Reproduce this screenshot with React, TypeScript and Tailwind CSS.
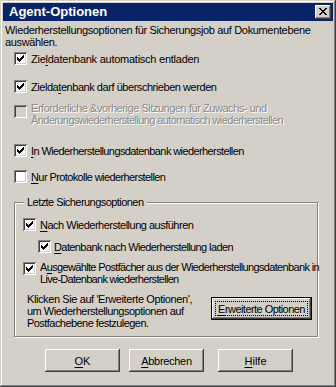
import React from "react";

function Check() {
  const cols: [number, number][] = [
    [3, 5],
    [4, 6],
    [5, 7],
    [6, 6],
    [7, 5],
    [8, 4],
    [9, 3],
  ];
  return (
    <svg width="13" height="13" viewBox="0 0 13 13" className="absolute left-0 top-0" shapeRendering="crispEdges">
      {cols.map(([x, y]) => (
        <rect key={x} x={x} y={y} width="1" height="3" fill="#000" />
      ))}
    </svg>
  );
}

function Box({ checked, disabled }: { checked?: boolean; disabled?: boolean }) {
  return (
    <span
      className={
        "relative block w-[13px] h-[13px] shrink-0 shadow-[inset_1px_1px_0_#808080,inset_-1px_-1px_0_#ffffff,inset_2px_2px_0_#404040,inset_-2px_-2px_0_#d4d0c8] " +
        (disabled ? "bg-[#d4d0c8]" : "bg-white")
      }
    >
      {checked && <Check />}
    </span>
  );
}

function U({ children }: { children: React.ReactNode }) {
  return <span className="underline underline-offset-[2px]">{children}</span>;
}

function Btn({ children, className = "" }: { children: React.ReactNode; className?: string }) {
  return (
    <div
      className={
        "flex items-center justify-center w-[75px] h-[23px] bg-[#d4d0c8] shadow-[inset_-1px_-1px_0_#404040,inset_1px_1px_0_#ffffff,inset_-2px_-2px_0_#808080,inset_2px_2px_0_#d4d0c8] " +
        className
      }
    >
      {children}
    </div>
  );
}

export default function App() {
  return (
    <div className="w-[336px] h-[387px] bg-[#d4d0c8] p-[3px] flex flex-col text-black text-[11px] leading-[12px] whitespace-nowrap font-['Liberation_Sans',Arial,sans-serif] shadow-[inset_-1px_-1px_0_#404040,inset_1px_1px_0_#d4d0c8,inset_-2px_-2px_0_#808080,inset_2px_2px_0_#ffffff]">
      {/* Title bar */}
      <div className="h-[18px] bg-[#0a246a] flex items-center justify-between pl-[6px] pr-[2px] shrink-0">
        <span className="text-white font-bold text-[13px] leading-[18px]">Agent-Optionen</span>
        <div className="relative w-[16px] h-[14px] bg-[#d4d0c8] shadow-[inset_-1px_-1px_0_#404040,inset_1px_1px_0_#ffffff,inset_-2px_-2px_0_#808080,inset_2px_2px_0_#d4d0c8]">
          <svg width="16" height="14" viewBox="0 0 16 14" className="absolute left-0 top-0" shapeRendering="crispEdges">
            {[
              [0, 6],
              [1, 5],
              [2, 4],
              [3, 3],
              [4, 2],
              [5, 1],
              [6, 0],
            ].map(([a, b], r) => (
              <g key={r}>
                <rect x={4 + a} y={3 + r} width="2" height="1" fill="#000" />
                <rect x={4 + b} y={3 + r} width="2" height="1" fill="#000" />
              </g>
            ))}
          </svg>
        </div>
      </div>

      {/* Content */}
      <div className="px-[2px] flex flex-col">
        <p className="mt-[3px] tracking-[-0.35px]">
          Wiederherstellungsoptionen für Sicherungsjob auf Dokumentebene
          <br />
          auswählen.
        </p>

        <div className="mt-[4px] ml-[9px] flex items-center gap-[4px] h-[13px]">
          <Box checked />
          <span className="tracking-[-0.25px]">
            Zie<U>l</U>datenbank automatisch entladen
          </span>
        </div>

        <div className="mt-[15px] ml-[9px] flex items-center gap-[4px] h-[13px]">
          <Box checked />
          <span className="tracking-[-0.45px]">
            Zielda<U>t</U>enbank darf überschrieben werden
          </span>
        </div>

        <div className="mt-[9px] ml-[9px] flex items-start gap-[4px]">
          <div className="pt-[3px]">
            <Box disabled />
          </div>
          <span className="text-[#8a8a8a] [text-shadow:1px_1px_0_#ffffff]">
            <span className="tracking-[-0.45px]">Erforderliche &amp;vorherige Sitzungen für Zuwachs- und</span>
            <br />
            <span className="tracking-[-0.6px]">Änderungswiederherstellung automatisch wiederherstellen</span>
          </span>
        </div>

        <div className="mt-[18px] ml-[9px] flex items-center gap-[4px] h-[13px]">
          <Box checked />
          <span className="tracking-[-0.6px]">
            <U>I</U>n Wiederherstellungsdatenbank wiederherstellen
          </span>
        </div>

        <div className="mt-[13px] ml-[9px] flex items-center gap-[4px] h-[13px]">
          <Box />
          <span className="tracking-[-0.6px]">
            <U>N</U>ur Protokolle wiederherstellen
          </span>
        </div>

        {/* Group box */}
        <div className="relative mt-[19px] ml-[9px] w-[304px] h-[135px] border border-[#808080] shadow-[inset_1px_1px_0_#ffffff,1px_1px_0_#ffffff] flex flex-col">
          <span className="absolute left-[9px] top-[-7px] px-[3px] bg-[#d4d0c8] leading-[13px] tracking-[-0.55px]">
            Letzte Sicherungsoptionen
          </span>

          <div className="mt-[15px] ml-[8px] flex items-center gap-[4px] h-[13px]">
            <Box checked />
            <span className="tracking-[-0.5px]">
              <U>N</U>ach Wiederherstellung ausführen
            </span>
          </div>

          <div className="mt-[9px] ml-[23px] flex items-center gap-[3px] h-[13px]">
            <Box checked />
            <span className="tracking-[-0.6px]">
              <U>D</U>atenbank nach Wiederherstellung laden
            </span>
          </div>

          <div className="mt-[8px] ml-[8px] flex items-start gap-[4px]">
            <div className="pt-[1px]">
              <Box checked />
            </div>
            <span>
              <span className="tracking-[-0.65px]">
                A<U>u</U>sgewählte Postfächer aus der Wiederherstellungsdatenbank in
              </span>
              <br />
              <span className="tracking-[-0.7px]">Live-Datenbank wiederherstellen</span>
            </span>
          </div>

          <div className="mt-[8px] ml-[12px] mr-[5px] flex items-start justify-between">
            <p>
              <span className="tracking-[-0.4px]">Klicken Sie auf 'Erweiterte Optionen',</span>
              <br />
              <span className="tracking-[-0.5px]">um Wiederherstellungsoptionen auf</span>
              <br />
              <span className="tracking-[-0.55px]">Postfachebene festzulegen.</span>
            </p>
            <div className="mt-[4px] w-[101px] h-[23px] border border-black bg-[#d4d0c8] shadow-[inset_-1px_-1px_0_#404040,inset_1px_1px_0_#ffffff,inset_-2px_-2px_0_#808080,inset_2px_2px_0_#d4d0c8] p-[3px]">
              <div className="w-full h-full border border-dotted border-black flex items-center justify-center">
                <span className="tracking-[-0.55px]">
                  <U>E</U>rweiterte Optionen
                </span>
              </div>
            </div>
          </div>
        </div>

        {/* Bottom buttons */}
        <div className="mt-[12px] flex">
          <Btn className="ml-[40px]">
            <U>O</U>K
          </Btn>
          <Btn className="ml-[9px]">
            <span className="tracking-[-0.3px]">
              <U>A</U>bbrechen
            </span>
          </Btn>
          <Btn className="ml-[14px]">
            <span>
              <U>H</U>ilfe
            </span>
          </Btn>
        </div>
      </div>
    </div>
  );
}
